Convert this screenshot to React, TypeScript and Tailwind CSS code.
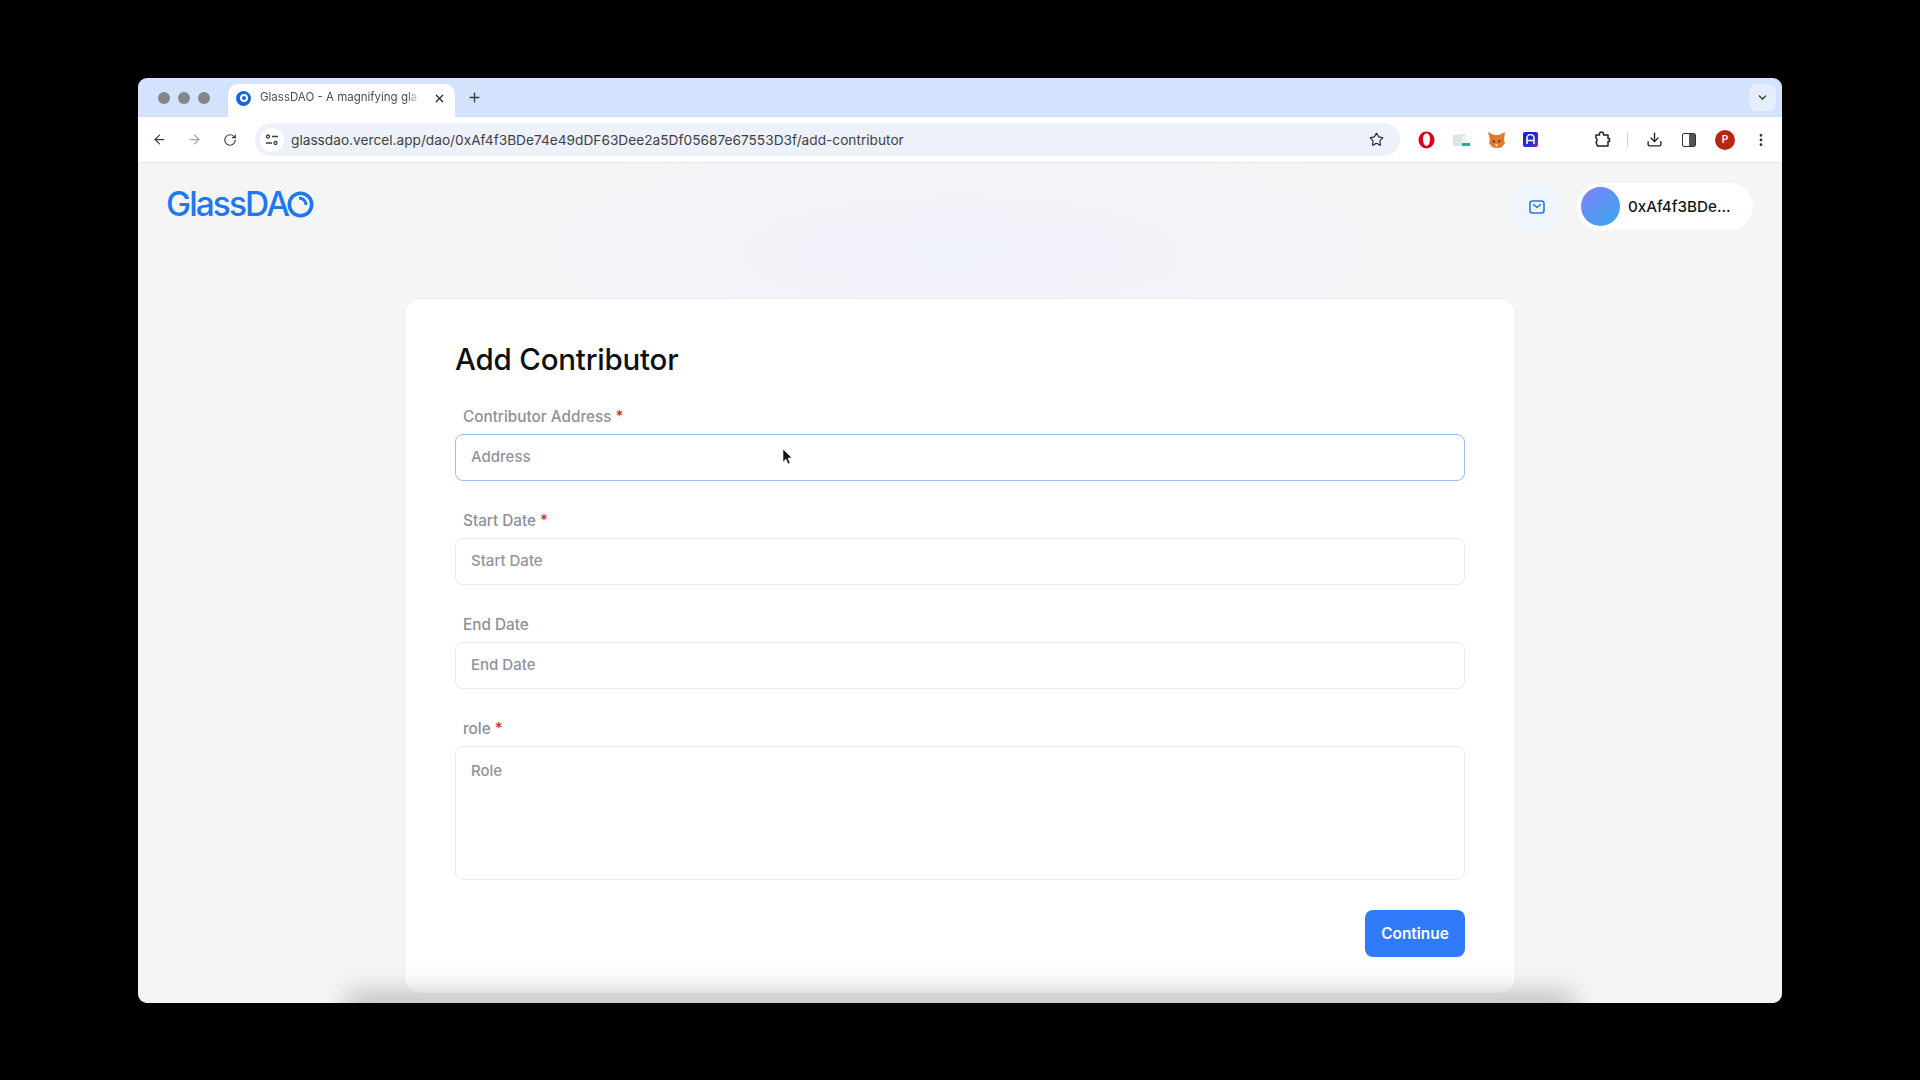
import { ArrowLeft, ArrowRight, ChevronDown, Download, MoreVertical, Plus, RotateCw, Star, X } from "lucide-react";

const font = "font-['Inter','Noto_Sans',sans-serif]";

function Field({ label, required, placeholder, focused }: { label: string; required?: boolean; placeholder: string; focused?: boolean }) {
  return (
    <div className="mb-[28px]">
      <p className="mb-[5px] h-[24px] pl-2 text-[15.3px] leading-[24px] font-medium text-[#8f9098]">
        {label}
        {required ? <span className="ml-1 text-[#c4352d]">*</span> : null}
      </p>
      <div
        className={`flex h-[47px] items-center rounded-[8px] border bg-white px-[15px] text-[15px] font-medium text-[#92939c] ${
          focused ? "border-[#9dbcf0]" : "border-[#ebebee]"
        }`}
      >
        {placeholder}
      </div>
    </div>
  );
}

function ExtensionIcons() {
  return (
    <div className="flex items-center gap-[18px]">
      <svg width="17" height="18" viewBox="0 0 17 18">
        <ellipse cx="8.5" cy="9" rx="8" ry="8.5" fill="#d8001a" />
        <path d="M5 8c0-3 1-5.500 3.500-5.500S12 5 12 8c0 4-1.500 7-3.500 7S5 12 5 8z" fill="#fff" />
      </svg>
      <svg width="17" height="13" viewBox="0 0 17 13">
        <path d="M0 2l9-1v12H0z" fill="#dfe3e3" />
        <path d="M9 1l4 1v8h4v3H9z" fill="#2fa9a0" />
        <path d="M9 1l4 1v8H9z" fill="#eef0f0" />
      </svg>
      <svg width="17" height="16" viewBox="0 0 17 16">
        <path d="M0 0l6 3h5l6-3-1 8 1 3-3 4-3 1H7l-3-1-3-4 1-3z" fill="#e5792b" />
        <path d="M4 8l3 1-1 2zM13 8l-3 1 1 2z" fill="#3b2a20" />
        <path d="M7 12h3l-1 3H8z" fill="#f2c9a5" />
      </svg>
      <div className="flex h-[15px] w-[15px] items-center justify-center rounded-[2px] bg-[linear-gradient(135deg,#1c1cc8,#3030d8_70%,#b0306a)]">
        <svg width="9" height="11" viewBox="0 0 9 11">
          <path d="M1 10V4a3.500 3.500 0 0 1 7 0v6M1 6.500h7" fill="none" stroke="#fff" strokeWidth="1.600" />
        </svg>
      </div>
    </div>
  );
}

function Browser() {
  return (
    <>
      <div className="flex h-[39px] shrink-0 items-end bg-[#d3e3fd] pl-[20px]">
        <div className="flex h-full items-center gap-[8px] pt-[1px]">
          <span className="h-[12px] w-[12px] rounded-full bg-[#84868c]" />
          <span className="h-[12px] w-[12px] rounded-full bg-[#84868c]" />
          <span className="h-[12px] w-[12px] rounded-full bg-[#84868c]" />
        </div>
        <div className="ml-[18px] flex h-[33px] w-[227px] items-center rounded-t-[10px] bg-white pb-[5px] pl-[8px] pr-[9px]">
          <span className="flex h-[15px] w-[15px] shrink-0 items-center justify-center rounded-full bg-[#1a66e0]">
            <span className="h-[8px] w-[8px] rounded-full border-2 border-white" />
          </span>
          <span className="ml-[9px] w-[160px] text-[11.5px] whitespace-nowrap text-[#4a4d52] [mask-image:linear-gradient(90deg,#000_92%,transparent)]">
            GlassDAO - A magnifying gla
          </span>
          <X className="ml-auto text-[#222]" size={13} strokeWidth={2.2} />
        </div>
        <div className="flex h-full items-center pl-[12px]">
          <Plus className="text-[#3c4043]" size={15} strokeWidth={2.2} />
        </div>
        <div className="mt-[6px] mr-[6px] mb-[6px] ml-auto flex h-[27px] w-[27px] items-center justify-center self-start rounded-[8px] bg-[#e5eefd]">
          <ChevronDown className="text-[#222]" size={13} strokeWidth={2.2} />
        </div>
      </div>

      <div className="flex h-[46px] shrink-0 items-center border-b border-[#e6e7ea] bg-white">
        <div className="flex w-[117px] shrink-0 items-center pl-[14px]">
          <ArrowLeft className="text-[#3c4043]" size={15} strokeWidth={2} />
          <ArrowRight className="ml-[20px] text-[#a5a7ab]" size={15} strokeWidth={2} />
          <RotateCw className="ml-[21px] text-[#3c4043]" size={14} strokeWidth={2} />
        </div>
        <div className="flex h-[33px] w-[1145px] shrink-0 items-center rounded-full bg-[#edf1f9] pl-[5px] pr-[16px]">
          <span className="flex h-[24px] w-[24px] items-center justify-center rounded-full bg-white">
            <svg width="14" height="12" viewBox="0 0 14 12" fill="none" stroke="#3c4043" strokeWidth="1.300">
              <circle cx="3" cy="2.500" r="1.500" />
              <path d="M7 2.500h6M1 9h6" />
              <circle cx="10.500" cy="9" r="1.500" />
            </svg>
          </span>
          <span className="ml-[7px] pt-[1px] text-[13.7px] text-[#3f4145]">glassdao.vercel.app/dao/0xAf4f3BDe74e49dDF63Dee2a5Df05687e67553D3f/add-contributor</span>
          <Star className="ml-auto text-[#222]" size={15} strokeWidth={1.8} />
        </div>
        <div className="ml-[18px]">
          <ExtensionIcons />
        </div>
        <svg className="ml-[56px]" width="17" height="17" viewBox="0 0 17 17" fill="none" stroke="#222" strokeWidth="1.500" strokeLinejoin="round">
          <path d="M2 4h3.500V3a2 2 0 0 1 4 0v1H14v3.500h1.500v3H14V15H3.500L2 11c1.500-1 1.500-3 0-4z" />
        </svg>
        <span className="ml-[16px] h-[15px] w-px bg-[#c4d7f3]" />
        <Download className="ml-[18px] text-[#222]" size={17} strokeWidth={1.9} />
        <div className="ml-[19px] flex h-[14px] w-[14px] overflow-hidden rounded-[2px] border-[1.5px] border-[#333]">
          <span className="w-1/2" />
          <span className="w-1/2 bg-[#555]" />
        </div>
        <span className="ml-[19px] flex h-[20px] w-[20px] items-center justify-center rounded-full bg-[#b5280f] text-[10px] font-semibold text-white">P</span>
        <MoreVertical className="ml-[18px] text-[#333]" size={16} strokeWidth={2.2} />
      </div>
    </>
  );
}

function Page() {
  return (
    <div className="relative min-h-0 flex-1 overflow-hidden bg-[#f5f5f6] bg-[radial-gradient(ellipse_500px_130px_at_50%_90px,#f0f2fb,transparent)]">
      <header className="flex h-[84px] items-start justify-between pt-[20px] pl-[28px] pr-[29px]">
        <div className="mt-[2px] flex items-center text-[#1f78ee]">
          <span className="text-[33.5px] leading-[38px] font-medium tracking-[-1.9px]">GlassDA</span>
          <svg className="ml-[-1px]" width="27" height="27" viewBox="0 0 27 27" fill="none" stroke="currentColor" strokeWidth="3.600">
            <circle cx="13.500" cy="13.500" r="11.200" />
            <path d="M12 7a7 7 0 0 1 7 7" strokeWidth="3" />
          </svg>
        </div>
        <div className="flex items-center">
          <button className="flex h-[46px] w-[49px] items-center justify-center rounded-[10px] bg-[#f0f4fb]">
            <svg width="16" height="14" viewBox="0 0 16 14" fill="none" stroke="#2a7ae8" strokeWidth="1.600" strokeLinecap="round" strokeLinejoin="round">
              <rect x="1" y="1" width="14" height="12" rx="2.500" />
              <path d="M4.500 4.500L8 7.500l3.500-3" />
            </svg>
          </button>
          <div className="ml-[16px] flex h-[47px] w-[176px] items-center rounded-full bg-white pl-[4px]">
            <span className="h-[39px] w-[39px] rounded-full bg-[linear-gradient(135deg,#8181f6,#35a9ef)]" />
            <span className="ml-[8px] pt-[1px] text-[15.2px] font-medium text-[#17181a]">0xAf4f3BDe...</span>
          </div>
        </div>
      </header>

      <div className="mt-[51px] ml-[266px] h-[696px] w-[1112px] rounded-[16px] border border-[#eeeef1] bg-white px-[50px] pt-[40px]">
        <h1 className="mb-[26px] text-[29.5px] leading-[40px] font-medium tracking-[-0.2px] text-[#0e0f11]">Add Contributor</h1>
        <Field label="Contributor Address" required placeholder="Address" focused />
        <Field label="Start Date" required placeholder="Start Date" />
        <Field label="End Date" placeholder="End Date" />
        <div>
          <p className="mb-[5px] h-[24px] pl-2 text-[15.3px] leading-[24px] font-medium text-[#8f9098]">
            role<span className="ml-1 text-[#c4352d]">*</span>
          </p>
          <div className="h-[134px] rounded-[8px] border border-[#ebebee] bg-white px-[15px] pt-[13px] text-[15px] font-medium text-[#92939c]">Role</div>
        </div>
        <div className="mt-[30px] flex justify-end">
          <button className="h-[47px] w-[100px] rounded-[8px] bg-[#2f7bfc] text-[15.4px] font-semibold text-white">Continue</button>
        </div>
      </div>

      {/* dock shadow from the screen recording */}
      <div className="pointer-events-none absolute right-[205px] bottom-[-24px] left-[205px] h-[36px] rounded-full bg-black/20 blur-[12px]" />
      <svg className="absolute top-[285px] left-[644px]" width="10" height="17" viewBox="0 0 10 17">
        <path d="M1 1v13l3-3 2 5 2-1-2-5h4z" fill="#111" stroke="#fff" strokeWidth="0.600" />
      </svg>
    </div>
  );
}

export default function App() {
  return (
    <div className={`flex h-screen w-full bg-black pt-[78px] pr-[138px] pb-[77px] pl-[138px] ${font}`}>
      <div className="flex min-w-0 flex-1 flex-col overflow-hidden rounded-[9px]">
        <Browser />
        <Page />
      </div>
    </div>
  );
}
